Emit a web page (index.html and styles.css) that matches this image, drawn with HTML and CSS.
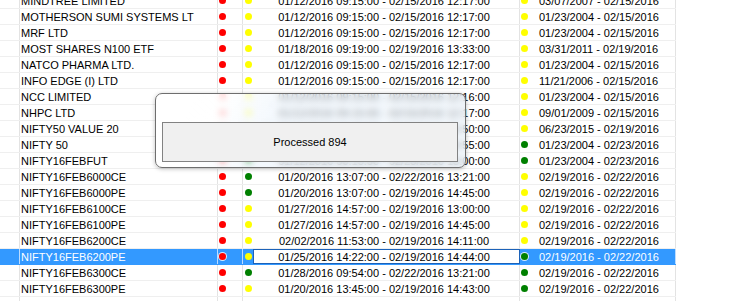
FILE: index.html
```html
<!DOCTYPE html>
<html>
<head>
  <meta charset="UTF-8">
  <title>Symbols</title>
  <link rel="stylesheet" href="styles.css">
</head>
<body>
  <div class="screen">
    <div class="grid">
      <div class="row">
        <span class="cell head"></span><span class="cell name">MINDTREE LIMITED</span>
        <span class="cell flag"><i class="dot red"></i></span><span class="cell flag2"><i class="dot yellow"></i></span>
        <span class="cell range">01/12/2016 09:15:00 - 02/15/2016 12:17:00</span>
        <span class="cell hist"><i class="dot yellow"></i>03/07/2007 - 02/15/2016</span>
      </div>
      <div class="row">
        <span class="cell head"></span><span class="cell name">MOTHERSON SUMI SYSTEMS LT</span>
        <span class="cell flag"><i class="dot red"></i></span><span class="cell flag2"><i class="dot yellow"></i></span>
        <span class="cell range">01/12/2016 09:15:00 - 02/15/2016 12:17:00</span>
        <span class="cell hist"><i class="dot yellow"></i>01/23/2004 - 02/15/2016</span>
      </div>
      <div class="row">
        <span class="cell head"></span><span class="cell name">MRF LTD</span>
        <span class="cell flag"><i class="dot red"></i></span><span class="cell flag2"><i class="dot yellow"></i></span>
        <span class="cell range">01/12/2016 09:15:00 - 02/15/2016 12:17:00</span>
        <span class="cell hist"><i class="dot yellow"></i>01/23/2004 - 02/15/2016</span>
      </div>
      <div class="row">
        <span class="cell head"></span><span class="cell name">MOST SHARES N100 ETF</span>
        <span class="cell flag"><i class="dot red"></i></span><span class="cell flag2"><i class="dot yellow"></i></span>
        <span class="cell range">01/18/2016 09:19:00 - 02/19/2016 13:33:00</span>
        <span class="cell hist"><i class="dot yellow"></i>03/31/2011 - 02/19/2016</span>
      </div>
      <div class="row">
        <span class="cell head"></span><span class="cell name">NATCO PHARMA LTD.</span>
        <span class="cell flag"><i class="dot red"></i></span><span class="cell flag2"><i class="dot yellow"></i></span>
        <span class="cell range">01/12/2016 09:15:00 - 02/15/2016 12:17:00</span>
        <span class="cell hist"><i class="dot yellow"></i>01/23/2004 - 02/15/2016</span>
      </div>
      <div class="row">
        <span class="cell head"></span><span class="cell name">INFO EDGE (I) LTD</span>
        <span class="cell flag"><i class="dot red"></i></span><span class="cell flag2"><i class="dot yellow"></i></span>
        <span class="cell range">01/12/2016 09:15:00 - 02/15/2016 12:17:00</span>
        <span class="cell hist"><i class="dot yellow"></i>11/21/2006 - 02/15/2016</span>
      </div>
      <div class="row">
        <span class="cell head"></span><span class="cell name">NCC LIMITED</span>
        <span class="cell flag"><i class="dot red"></i></span><span class="cell flag2"><i class="dot yellow"></i></span>
        <span class="cell range">01/12/2016 09:15:00 - 02/15/2016 12:16:00</span>
        <span class="cell hist"><i class="dot yellow"></i>01/23/2004 - 02/15/2016</span>
      </div>
      <div class="row">
        <span class="cell head"></span><span class="cell name">NHPC LTD</span>
        <span class="cell flag"><i class="dot red"></i></span><span class="cell flag2"><i class="dot yellow"></i></span>
        <span class="cell range">01/12/2016 09:15:00 - 02/15/2016 12:17:00</span>
        <span class="cell hist"><i class="dot yellow"></i>09/01/2009 - 02/15/2016</span>
      </div>
      <div class="row">
        <span class="cell head"></span><span class="cell name">NIFTY50 VALUE 20</span>
        <span class="cell flag"><i class="dot red"></i></span><span class="cell flag2"><i class="dot yellow"></i></span>
        <span class="cell range">01/12/2016 09:15:00 - 02/19/2016 15:50:00</span>
        <span class="cell hist"><i class="dot yellow"></i>06/23/2015 - 02/19/2016</span>
      </div>
      <div class="row">
        <span class="cell head"></span><span class="cell name">NIFTY 50</span>
        <span class="cell flag"><i class="dot red"></i></span><span class="cell flag2"><i class="dot green"></i></span>
        <span class="cell range">01/12/2016 09:15:00 - 02/23/2016 14:55:00</span>
        <span class="cell hist"><i class="dot green"></i>01/23/2004 - 02/23/2016</span>
      </div>
      <div class="row">
        <span class="cell head"></span><span class="cell name">NIFTY16FEBFUT</span>
        <span class="cell flag"><i class="dot red"></i></span><span class="cell flag2"><i class="dot green"></i></span>
        <span class="cell range">01/12/2016 09:15:00 - 02/23/2016 15:00:00</span>
        <span class="cell hist"><i class="dot green"></i>01/23/2004 - 02/23/2016</span>
      </div>
      <div class="row">
        <span class="cell head"></span><span class="cell name">NIFTY16FEB6000CE</span>
        <span class="cell flag"><i class="dot red"></i></span><span class="cell flag2"><i class="dot green"></i></span>
        <span class="cell range">01/20/2016 13:07:00 - 02/22/2016 13:21:00</span>
        <span class="cell hist"><i class="dot yellow"></i>02/19/2016 - 02/22/2016</span>
      </div>
      <div class="row">
        <span class="cell head"></span><span class="cell name">NIFTY16FEB6000PE</span>
        <span class="cell flag"><i class="dot red"></i></span><span class="cell flag2"><i class="dot green"></i></span>
        <span class="cell range">01/20/2016 13:07:00 - 02/19/2016 14:45:00</span>
        <span class="cell hist"><i class="dot yellow"></i>02/19/2016 - 02/22/2016</span>
      </div>
      <div class="row">
        <span class="cell head"></span><span class="cell name">NIFTY16FEB6100CE</span>
        <span class="cell flag"><i class="dot red"></i></span><span class="cell flag2"><i class="dot yellow"></i></span>
        <span class="cell range">01/27/2016 14:57:00 - 02/19/2016 13:00:00</span>
        <span class="cell hist"><i class="dot yellow"></i>02/19/2016 - 02/22/2016</span>
      </div>
      <div class="row">
        <span class="cell head"></span><span class="cell name">NIFTY16FEB6100PE</span>
        <span class="cell flag"><i class="dot red"></i></span><span class="cell flag2"><i class="dot yellow"></i></span>
        <span class="cell range">01/27/2016 14:57:00 - 02/19/2016 14:45:00</span>
        <span class="cell hist"><i class="dot yellow"></i>02/19/2016 - 02/22/2016</span>
      </div>
      <div class="row">
        <span class="cell head"></span><span class="cell name">NIFTY16FEB6200CE</span>
        <span class="cell flag"><i class="dot red"></i></span><span class="cell flag2"><i class="dot yellow"></i></span>
        <span class="cell range">02/02/2016 11:53:00 - 02/19/2016 14:11:00</span>
        <span class="cell hist"><i class="dot yellow"></i>02/19/2016 - 02/22/2016</span>
      </div>
      <div class="row selected">
        <span class="cell head"></span><span class="cell name">NIFTY16FEB6200PE</span>
        <span class="cell flag"><i class="dot red"></i></span><span class="cell flag2"><i class="dot yellow"></i></span>
        <span class="cell range current">01/25/2016 14:22:00 - 02/19/2016 14:44:00</span>
        <span class="cell hist"><i class="dot green"></i>02/19/2016 - 02/22/2016</span>
      </div>
      <div class="row">
        <span class="cell head"></span><span class="cell name">NIFTY16FEB6300CE</span>
        <span class="cell flag"><i class="dot red"></i></span><span class="cell flag2"><i class="dot green"></i></span>
        <span class="cell range">01/28/2016 09:54:00 - 02/22/2016 13:21:00</span>
        <span class="cell hist"><i class="dot green"></i>02/19/2016 - 02/22/2016</span>
      </div>
      <div class="row">
        <span class="cell head"></span><span class="cell name">NIFTY16FEB6300PE</span>
        <span class="cell flag"><i class="dot red"></i></span><span class="cell flag2"><i class="dot yellow"></i></span>
        <span class="cell range">01/20/2016 13:45:00 - 02/19/2016 14:43:00</span>
        <span class="cell hist"><i class="dot green"></i>02/19/2016 - 02/22/2016</span>
      </div>
      <div class="row">
        <span class="cell head"></span><span class="cell name">NIFTY16FEB6400CE</span>
        <span class="cell flag"><i class="dot red"></i></span><span class="cell flag2"><i class="dot yellow"></i></span>
        <span class="cell range">01/20/2016 13:07:00 - 02/19/2016 14:45:00</span>
        <span class="cell hist"><i class="dot green"></i>02/19/2016 - 02/22/2016</span>
      </div>
    </div>

    <div class="progress">
      <div class="progress-box">Processed 894</div>
    </div>
  </div>
</body>
</html>
```

FILE: styles.css
```css
* {
  box-sizing: border-box;
}
html,
body {
  margin: 0;
  background: #fff;
  overflow: hidden;
}
body {
  font-family: "Liberation Sans", Arial, sans-serif;
  font-size: 11px;
  color: #000;
}
.screen {
  position: relative;
  width: 734px;
  height: 301px;
  overflow: hidden;
}

/* data grid */
.grid {
  margin-top: -7px;
  width: 676px;
}
.row {
  display: flex;
  height: 16px;
  border-bottom: 1px solid #efefef;
}
.cell {
  display: flex;
  align-items: center;
  height: 15px;
  padding-top: 1px;
  line-height: 14px;
  white-space: nowrap;
  overflow: hidden;
  border-right: 1px solid #e3e3e3;
}
.head {
  width: 20px;
}
.name {
  width: 198px;
  padding-left: 1px;
}
.flag {
  width: 25px;
  padding-left: 1px;
}
.flag2 {
  width: 10px;
  padding-left: 2px;
  border-right: 0;
}
.range {
  width: 267px;
  justify-content: center;
  padding-right: 4px;
}
.hist {
  width: 156px;
  padding-left: 1px;
}
.hist .dot {
  margin-right: 11px;
}

.dot {
  display: block;
  width: 7px;
  height: 7px;
  margin-top: -1px;
  border-radius: 50%;
  flex: none;
}
.red { background: #ff0000; }
.yellow { background: #ffff00; }
.green { background: #008000; }

/* selected row */
.selected {
  background: #3399ff;
  color: #fff;
  border-bottom-color: #3399ff;
}
.selected .cell {
  border-right-color: #bcdcff;
}
.selected .red,
.selected .green {
  box-shadow: 0 0 0 1px rgba(255, 255, 255, 0.8);
}
.selected .current {
  background: #fff;
  color: #000;
  border-right-color: #1c62b9;
  box-shadow: inset 1px 0 0 #1c62b9, inset 0 1px 0 #1c62b9, inset 0 -1px 0 #1c62b9;
}

/* progress popup */
.progress {
  position: absolute;
  left: 155px;
  top: 93px;
  width: 311px;
  height: 75px;
  padding: 28px 7px 5px 6px;
  border: 1px solid #6e6e6e;
  border-radius: 7px;
  background: linear-gradient(115deg, #fff 0, #fff 12%, rgba(255, 255, 255, 0.85) 20%, rgba(236, 244, 252, 0.62) 38%, rgba(236, 244, 252, 0.6) 100%);
  backdrop-filter: blur(3px);
  box-shadow: 0 1px 4px rgba(0, 0, 0, 0.25);
}
.progress-box {
  display: flex;
  align-items: center;
  justify-content: center;
  width: 296px;
  height: 40px;
  border: 1px solid #828282;
  background: #f0f0f0;
  color: #000;
}
```
